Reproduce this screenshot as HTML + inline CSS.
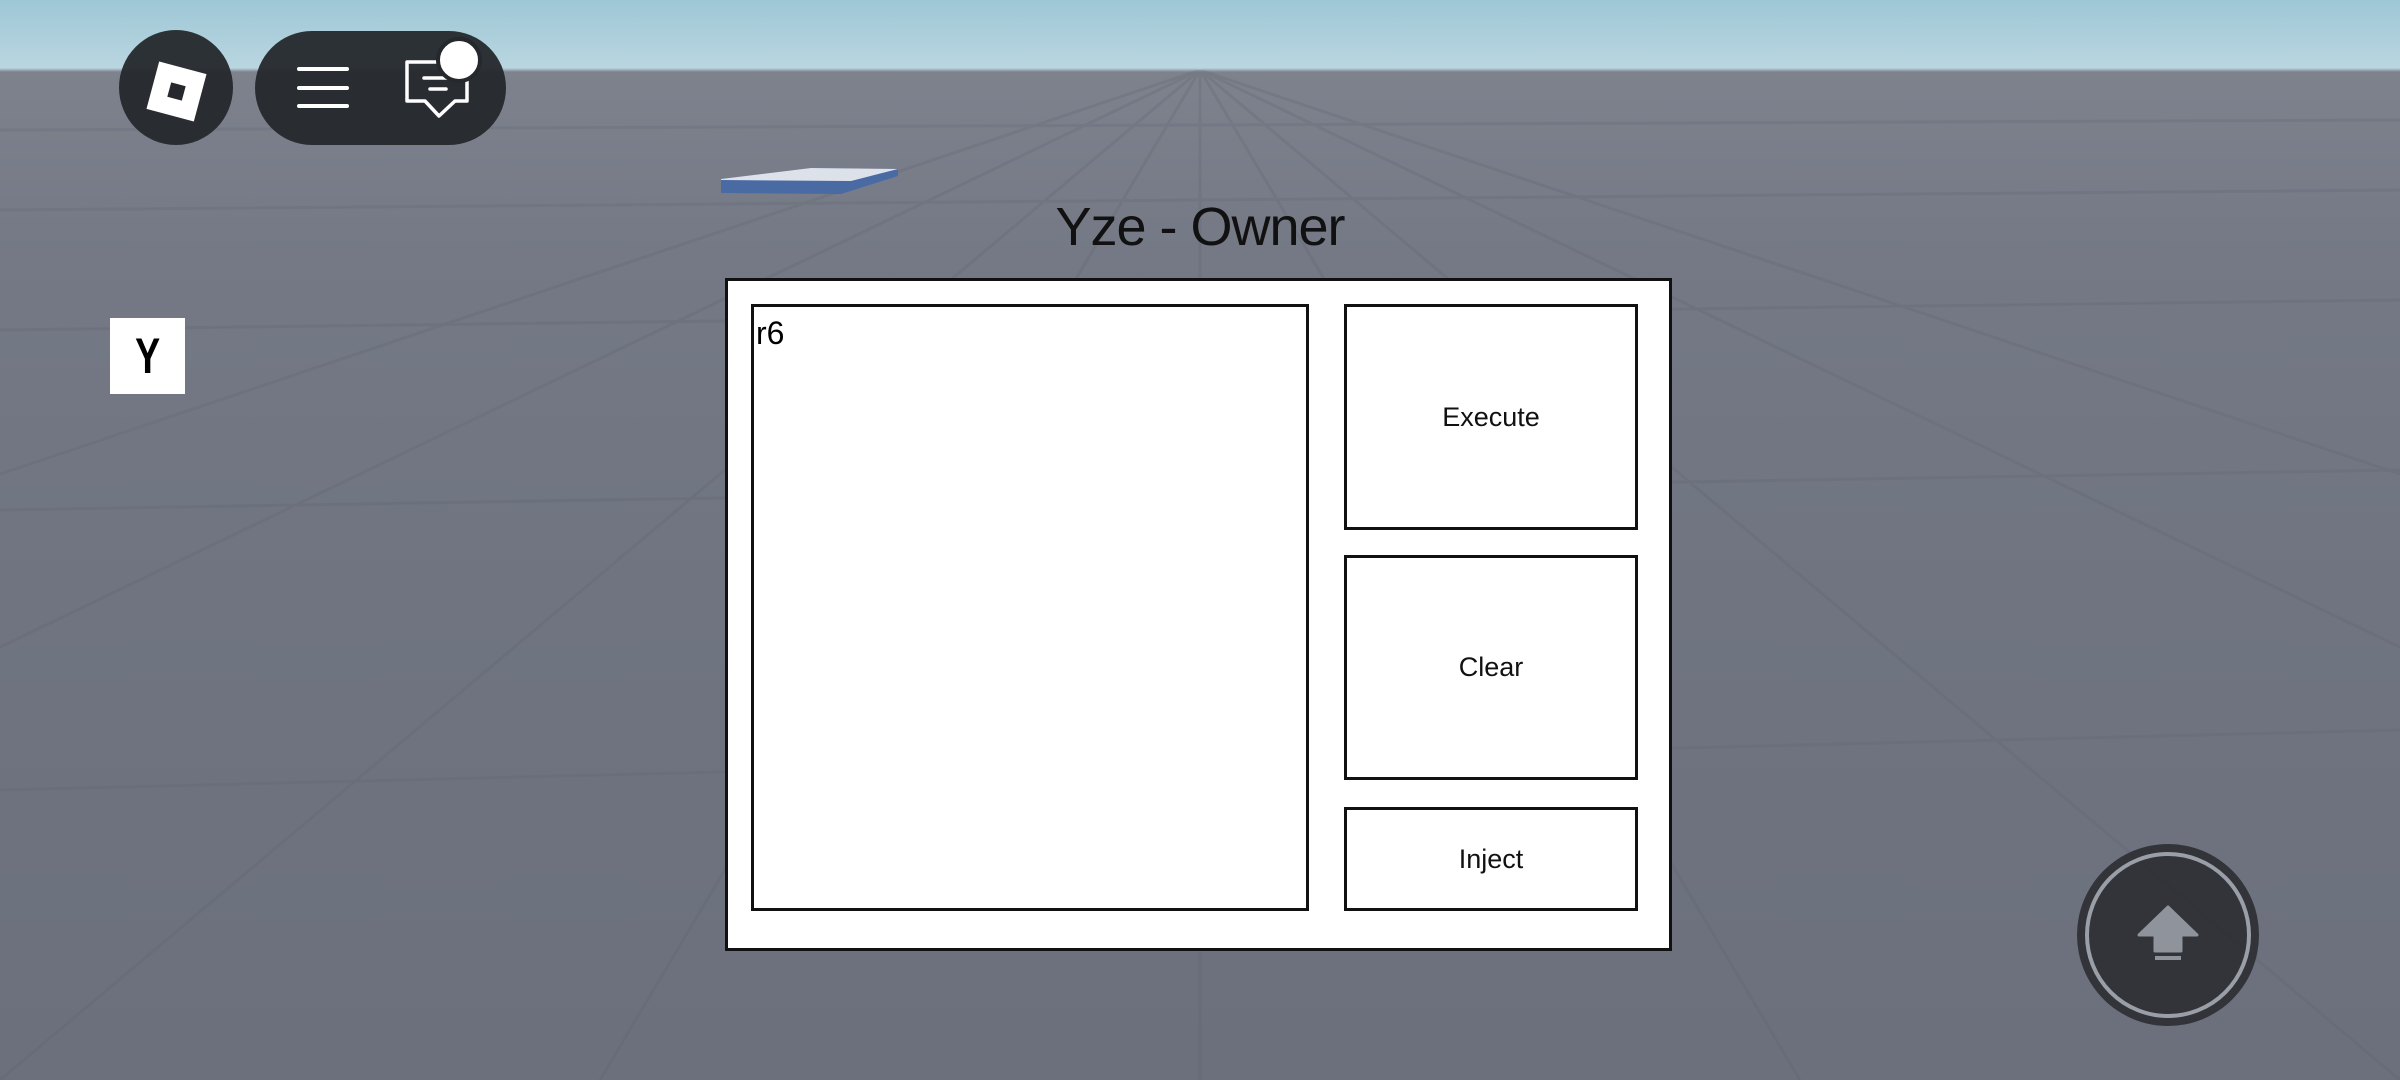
<!DOCTYPE html>
<html><head><meta charset="utf-8"><style>
html,body{margin:0;padding:0}
body{width:2400px;height:1080px;position:relative;overflow:hidden;font-family:"Liberation Sans","DejaVu Sans",sans-serif;
background:linear-gradient(180deg,#9ec7d6 0px,#b9d6e0 68px,#7d828d 72px,#747985 250px,#6f7480 600px,#6b707c 1080px);}
.abs{position:absolute;box-sizing:border-box}
.box{border:3px solid #111;background:#fff}
.btn{display:flex;align-items:center;justify-content:center;font-size:27px;color:#111}
</style></head><body>
<svg class="abs" style="left:0;top:70px" width="2400" height="1010" viewBox="0 0 2400 1010">
<g stroke="#5f6470" stroke-width="3" opacity="0.25" fill="none">
<line x1="1200" y1="0" x2="-1800" y2="1010"/><line x1="1200" y1="0" x2="-900" y2="1010"/>
<line x1="1200" y1="0" x2="0" y2="1010"/><line x1="1200" y1="0" x2="600" y2="1010"/>
<line x1="1200" y1="0" x2="1200" y2="1010"/><line x1="1200" y1="0" x2="1800" y2="1010"/>
<line x1="1200" y1="0" x2="2400" y2="1010"/><line x1="1200" y1="0" x2="3300" y2="1010"/>
<line x1="1200" y1="0" x2="4200" y2="1010"/>
<line x1="0" y1="60" x2="2400" y2="50"/><line x1="0" y1="140" x2="2400" y2="120"/>
<line x1="0" y1="260" x2="2400" y2="230"/><line x1="0" y1="440" x2="2400" y2="400"/>
<line x1="0" y1="720" x2="2400" y2="660"/>
</g></svg>
<!-- slab -->
<svg class="abs" style="left:721px;top:166px" width="180" height="32" viewBox="0 0 180 32">
<polygon points="0,13 90,2 177,3 177,10 120,28 0,27" fill="#4a6aa4"/>
<polygon points="0,13 90,2 177,3 130,15 0,14" fill="#dde2ea"/>
</svg>
<!-- roblox button -->
<div class="abs" style="left:119px;top:30px;width:114px;height:115px;border-radius:50%;background:#25282c;opacity:.95"></div>
<div class="abs" style="left:152px;top:67px;width:49px;height:49px;background:#fff;transform:rotate(15deg)"><div style="position:absolute;left:17px;top:17px;width:15px;height:15px;background:#25282c"></div></div>
<!-- pill -->
<div class="abs" style="left:255px;top:31px;width:251px;height:114px;border-radius:57px;background:#25282c;opacity:.95"></div>
<div class="abs" style="left:297px;top:67px;width:52px;height:4px;background:#fff;border-radius:2px"></div>
<div class="abs" style="left:297px;top:86px;width:52px;height:4px;background:#fff;border-radius:2px"></div>
<div class="abs" style="left:297px;top:104px;width:52px;height:4px;background:#fff;border-radius:2px"></div>
<svg class="abs" style="left:404px;top:58px" width="70" height="62" viewBox="0 0 70 62">
<path d="M3 4 H63 V43 H51 L35 58 L21 43 H3 Z" fill="none" stroke="#fff" stroke-width="3.5" stroke-linejoin="round"/>
<line x1="20" y1="20" x2="50" y2="20" stroke="#fff" stroke-width="3.5" stroke-linecap="round"/>
<line x1="26" y1="31" x2="42" y2="31" stroke="#fff" stroke-width="3.5" stroke-linecap="round"/>
</svg>
<div class="abs" style="left:436px;top:37px;width:46px;height:46px;border-radius:50%;background:#fff;border:4px solid #25282c"></div>
<!-- Y -->
<div class="abs" style="left:110px;top:318px;width:75px;height:76px;background:#fff;display:flex;align-items:center;justify-content:center;font-weight:bold;font-size:50px;color:#000"><span style="display:inline-block;transform:scaleX(0.75)">Y</span></div>
<!-- title -->
<div class="abs" style="left:900px;top:196px;width:600px;text-align:center;font-size:54px;color:#111;letter-spacing:-1px">Yze - Owner</div>
<!-- panel -->
<div class="abs box" style="left:725px;top:278px;width:947px;height:673px"></div>
<div class="abs box" style="left:751px;top:304px;width:558px;height:607px;font-size:32px;padding:8px 0 0 2px;border-width:3px">r6</div>
<div class="abs box btn" style="left:1344px;top:304px;width:294px;height:226px">Execute</div>
<div class="abs box btn" style="left:1344px;top:555px;width:294px;height:225px">Clear</div>
<div class="abs box btn" style="left:1344px;top:807px;width:294px;height:104px">Inject</div>
<!-- jump -->
<div class="abs" style="left:2077px;top:844px;width:182px;height:182px;border-radius:50%;background:rgba(40,41,46,.85)"></div>
<div class="abs" style="left:2085px;top:852px;width:166px;height:166px;border-radius:50%;border:4px solid #9a9ea7"></div>
<svg class="abs" style="left:2135px;top:905px" width="66" height="62" viewBox="0 0 66 62">
<path d="M33 2 L62 30 L46 30 L46 46 L20 46 L20 30 L4 30 Z" fill="#8f939c" stroke="#8f939c" stroke-width="3" stroke-linejoin="round"/>
<rect x="20" y="51" width="26" height="4" fill="#8f939c"/>
</svg>
</body></html>
